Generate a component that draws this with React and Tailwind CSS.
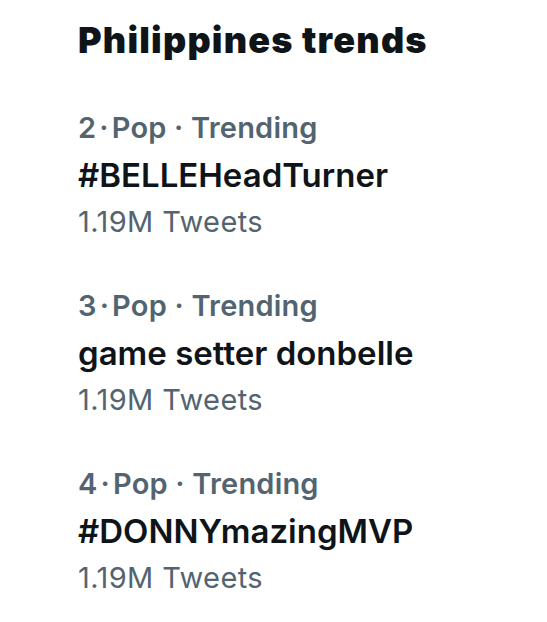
const trends = [
  { rank: 2, name: "#BELLEHeadTurner", count: "1.19M Tweets" },
  { rank: 3, name: "game setter donbelle", count: "1.19M Tweets" },
  { rank: 4, name: "#DONNYmazingMVP", count: "1.19M Tweets" },
];

export default function App() {
  return (
    <div className="min-h-[622px] w-[547px] bg-white pl-[78px] pt-[18px] font-['Inter',sans-serif]">
      <h1 className="text-[36px] leading-[44px] font-black tracking-[1.2px] text-[#0f1419]">
        Philippines trends
      </h1>

      <div className="mt-[43px] flex flex-col gap-[38px]">
        {trends.map((t) => (
          <div key={t.rank} className="flex flex-col">
            <p className="text-[29px] leading-[46px] font-semibold tracking-[0.2px] text-[#536471]">
              {t.rank}<span className="mx-[3px]">·</span>Pop · Trending
            </p>
            <p className="text-[33px] leading-[48px] font-semibold text-[#0f1419]">{t.name}</p>
            <p className="text-[29px] leading-[46px] tracking-[0.4px] text-[#536471]">{t.count}</p>
          </div>
        ))}
      </div>
    </div>
  );
}
